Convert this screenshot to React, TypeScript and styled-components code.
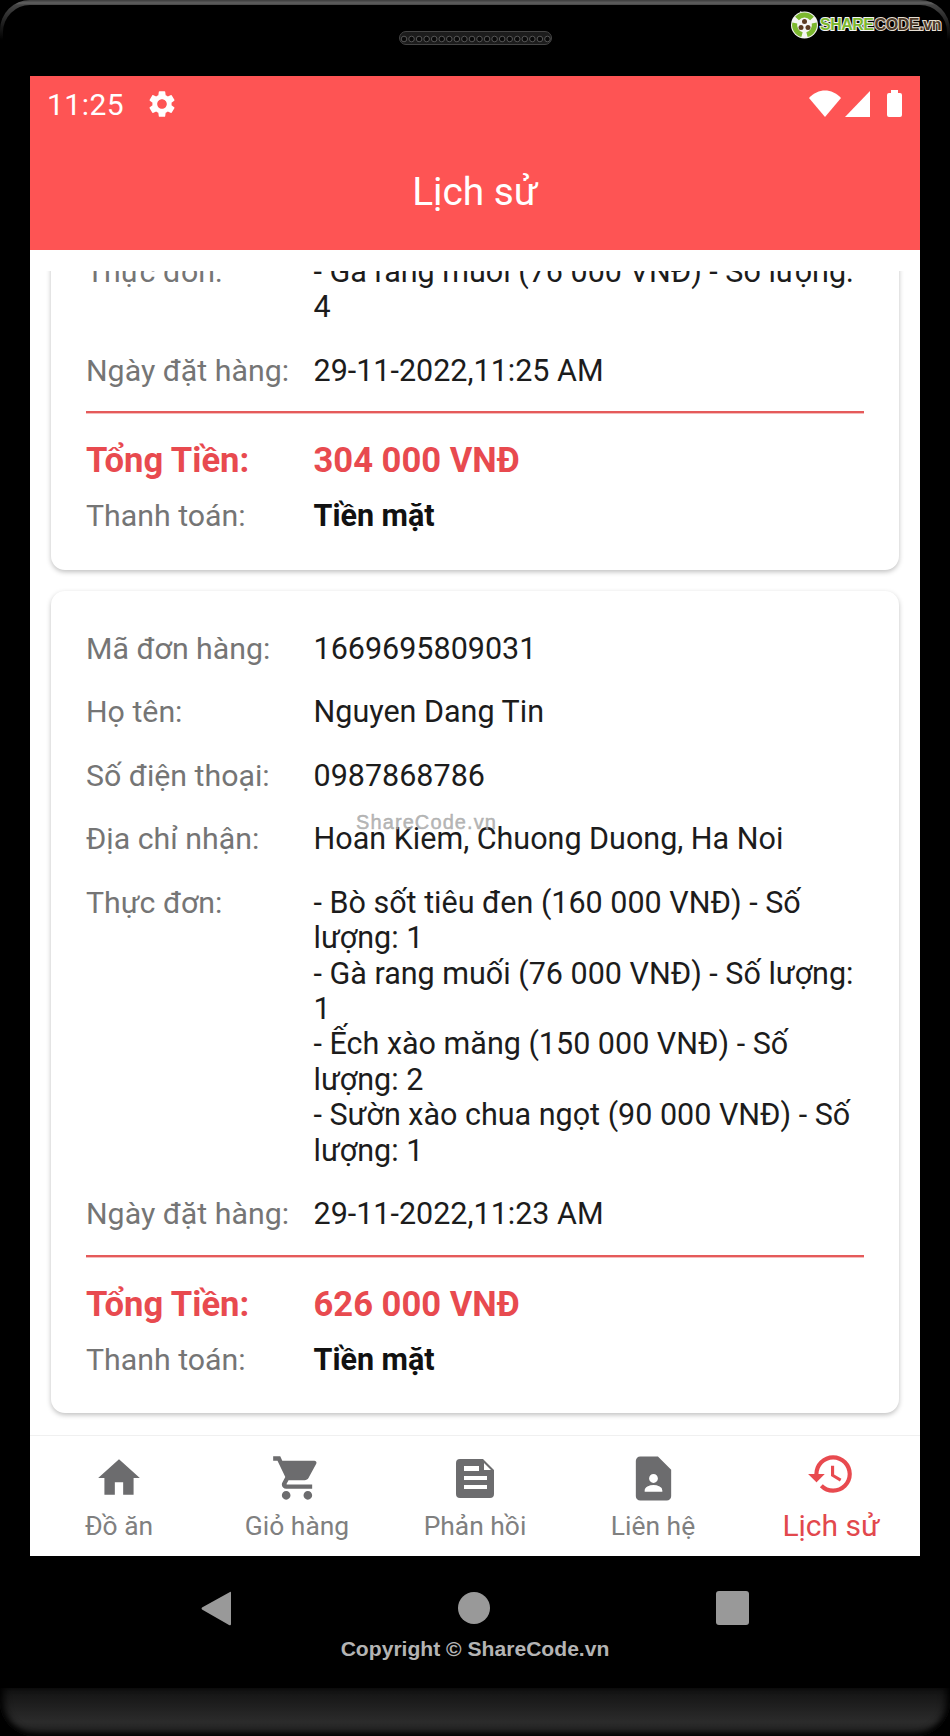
import styled, { createGlobalStyle } from "styled-components";
import { MdContactPage, MdHistory, MdHome, MdSettings, MdShoppingCart } from "react-icons/md";

const GlobalStyle = createGlobalStyle`
  html, body {
    margin: 0;
    padding: 0;
    background: #000;
    font-family: Roboto, "Noto Sans", sans-serif;
  }
`;

const Phone = styled.div`
  position: relative;
  width: 950px;
  height: 1736px;
  background: #000;
  overflow: hidden;
  display: flex;
  flex-direction: column;
`;

const TopBezel = styled.div`
  position: relative;
  height: 76px;
  box-sizing: border-box;
  flex-shrink: 0;
  padding: 5px 3px 0;
  display: flex;
  background: linear-gradient(#3c3c3c 0, #606060 3px, #444 5px, #222 22px, #000 40px);
  border-radius: 30px 30px 0 0;
`;

const BezelInner = styled.div`
  flex: 1;
  display: flex;
  justify-content: center;
  background: #000;
  border-radius: 27px 27px 0 0;
`;

const Speaker = styled.div`
  height: 14px;
  margin-top: 26px;
  display: flex;
`;

const Logo = styled.div`
  position: absolute;
  top: 10px;
  left: 790px;
  display: flex;
  align-items: center;
  gap: 1px;
`;

const LogoGreen = styled.span`
  font: 700 16px "Liberation Sans", sans-serif;
  letter-spacing: -0.5px;
  color: #7cb82f;
  -webkit-text-stroke: 2px #f4f4f4;
  paint-order: stroke fill;
`;

const LogoBrown = styled.span`
  font: 700 16px "Liberation Sans", sans-serif;
  letter-spacing: -0.4px;
  color: #4e3b29;
  -webkit-text-stroke: 2px #e6ded2;
  paint-order: stroke fill;
`;

const Screen = styled.div`
  height: 1480px;
  margin: 0 30px;
  flex-shrink: 0;
  background: #fff;
  display: flex;
  flex-direction: column;
  overflow: hidden;
`;

const Header = styled.div`
  height: 174px;
  flex-shrink: 0;
  background: #fe5454;
  color: #fff;
  display: flex;
  flex-direction: column;
`;

const StatusBar = styled.div`
  height: 54px;
  padding: 2px 15px 0 17px;
  box-sizing: border-box;
  display: flex;
  align-items: center;
  justify-content: space-between;
`;

const StatusLeft = styled.div`
  display: flex;
  align-items: center;
  gap: 22px;
`;

const StatusTime = styled.span`
  font-size: 30px;
  letter-spacing: 0.5px;
`;

const Title = styled.div`
  flex: 1;
  padding-top: 3px;
  display: flex;
  align-items: center;
  justify-content: center;
  font-size: 38.8px;
`;

const Body = styled.div`
  flex: 1;
  min-height: 0;
  padding-top: 21px;
  display: flex;
  flex-direction: column;
`;

const OrderList = styled.div`
  flex: 1;
  min-height: 0;
  overflow: hidden;
  padding: 0 21px;
  display: flex;
  flex-direction: column;
  gap: 21px;
`;

const Card = styled.div<{ $scrolled?: boolean }>`
  flex-shrink: 0;
  background: #fff;
  border-radius: 14px;
  box-shadow: 0 2px 5px rgba(0, 0, 0, 0.25);
  padding: ${({ $scrolled }) => ($scrolled ? "0" : "40px")} 35px 36px;
  margin-top: ${({ $scrolled }) => ($scrolled ? "-17px" : "0")};
`;

const Row = styled.div`
  display: flex;
  line-height: 35.4px;
  margin-bottom: 28.1px;
`;

const Label = styled.div`
  width: 227.5px;
  flex-shrink: 0;
  font-size: 30.3px;
  color: #757575;
`;

const Value = styled.div`
  flex: 1;
  font-size: 30.5px;
  color: #1c1c1c;
`;

const Divider = styled.div`
  height: 2px;
  background: #e55a5a;
  box-shadow: 0 1px 0 rgba(229, 90, 90, 0.4);
  margin: -5px 0 26px;
`;

const TotalRow = styled.div`
  display: flex;
  font-size: 34.6px;
  line-height: 42px;
  font-weight: 700;
  color: #e84a4f;
  margin-bottom: 17px;
`;

const TotalLabel = styled.div`
  width: 227.5px;
  flex-shrink: 0;
`;

const PayRow = styled.div`
  display: flex;
  line-height: 35.4px;
`;

const PayValue = styled.div`
  font-size: 30.5px;
  font-weight: 700;
  color: #111;
`;

const Watermark = styled.div`
  position: absolute;
  top: 811px;
  left: 356px;
  font: 400 20px "Liberation Sans", sans-serif;
  letter-spacing: 1.1px;
  color: rgba(170, 170, 170, 0.85);
  -webkit-text-stroke: 0.5px rgba(170, 170, 170, 0.85);
`;

const TabBar = styled.div`
  height: 121px;
  flex-shrink: 0;
  border-top: 1px solid #f0f0f0;
  box-sizing: border-box;
  display: grid;
  grid-template-columns: repeat(5, 1fr);
`;

const Tab = styled.div<{ $active?: boolean }>`
  display: flex;
  flex-direction: column;
  align-items: center;
  padding-top: ${({ $active }) => ($active ? "12px" : "16px")};
  color: ${({ $active }) => ($active ? "#e84a4f" : "#6c6c6e")};
`;

const IconSlot = styled.div`
  height: 52px;
  display: flex;
  align-items: center;
  justify-content: center;
`;

const TabLabel = styled.div<{ $active?: boolean }>`
  font-size: ${({ $active }) => ($active ? "30px" : "26.4px")};
  line-height: 32px;
  margin-top: ${({ $active }) => ($active ? "10px" : "6px")};
  color: ${({ $active }) => ($active ? "#e2484d" : "#808080")};
`;

const KeysArea = styled.div`
  height: 132px;
  flex-shrink: 0;
  display: flex;
  flex-direction: column;
  align-items: center;
`;

const NavKeys = styled.div`
  height: 46px;
  margin-top: 35px;
  width: 548px;
  display: flex;
  align-items: flex-start;
  justify-content: space-between;
`;

const RoundKey = styled.div`
  width: 32px;
  height: 32px;
  margin-top: 1px;
  border-radius: 50%;
  background: #999;
`;

const SquareKey = styled.div`
  width: 33px;
  height: 34px;
  border-radius: 3px;
  background: #999;
`;

const Copyright = styled.div`
  font: 700 21.1px "Liberation Sans", sans-serif;
  color: #b4b4b4;
`;

const BottomBezel = styled.div`
  flex: 1;
  background: linear-gradient(#121212, #2b2b2b 70%, #222);
  box-shadow: inset 0 -5px 7px -2px #000, inset 7px 0 8px -4px #000, inset -7px 0 8px -4px #000;
  border-radius: 0 0 34px 34px;
`;

const orders = [
  {
    scrolled: true,
    rows: [] as { label: string; value: string }[],
    menu: ["- Gà rang muối (76 000 VNĐ) - Số lượng: 4"],
    date: "29-11-2022,11:25 AM",
    total: "304 000 VNĐ",
  },
  {
    scrolled: false,
    rows: [
      { label: "Mã đơn hàng:", value: "1669695809031" },
      { label: "Họ tên:", value: "Nguyen Dang Tin" },
      { label: "Số điện thoại:", value: "0987868786" },
      { label: "Địa chỉ nhận:", value: "Hoan Kiem, Chuong Duong, Ha Noi" },
    ],
    menu: [
      "- Bò sốt tiêu đen (160 000 VNĐ) - Số lượng: 1",
      "- Gà rang muối (76 000 VNĐ) - Số lượng: 1",
      "- Ếch xào măng (150 000 VNĐ) - Số lượng: 2",
      "- Sườn xào chua ngọt (90 000 VNĐ) - Số lượng: 1",
    ],
    date: "29-11-2022,11:23 AM",
    total: "626 000 VNĐ",
  },
];

// rounded sheet with a folded corner, the bundled packs only have the narrow one
const NoteIcon = () => (
  <svg width="38" height="39" viewBox="0 0 38 39">
    <path
      fillRule="evenodd"
      fill="currentColor"
      d="M4 0H27L38 11V35Q38 39 34 39H4Q0 39 0 35V4Q0 0 4 0ZM8 7V12H23V7ZM8 17V21H31V17ZM8 26V30H31V26Z"
    />
    <path d="M28 4L35 11H28Z" fill="#fff" />
  </svg>
);

const tabs = [
  { label: "Đồ ăn", icon: <MdHome size={50} /> },
  { label: "Giỏ hàng", icon: <MdShoppingCart size={52} /> },
  { label: "Phản hồi", icon: <NoteIcon /> },
  { label: "Liên hệ", icon: <MdContactPage size={53} /> },
  { label: "Lịch sử", icon: <MdHistory size={50} />, active: true },
];

const grilleDots = Array.from({ length: 20 }, (_, i) => 5 + i * 7.55);

export default function App() {
  return (
    <Phone>
      <GlobalStyle />
      <TopBezel>
        <BezelInner>
          <Speaker>
            <svg width="153" height="14" viewBox="0 0 153 14">
              <rect x="0.5" y="0.5" width="152" height="13" rx="6.5" fill="#1c1c1c" stroke="#444" />
              {grilleDots.map((cx) => (
                <circle key={cx} cx={cx} cy="8" r="2.8" fill="#0a0a0a" stroke="#555" />
              ))}
            </svg>
          </Speaker>
        </BezelInner>
        <Logo>
          <svg width="29" height="29" viewBox="0 0 29 29">
            <circle cx="14.5" cy="15" r="13.5" fill="#f4f4f4" />
            <path d="M10 1 L14 3 L12 7 Z" fill="#f4f4f4" />
            <g fill="none" stroke="#7cb82f" strokeWidth="5">
              <path d="M7 8.5 A10 10 0 0 1 22 8.5" />
              <path d="M24.2 13 A10 10 0 0 1 17 24.7" />
              <path d="M12 24.7 A10 10 0 0 1 4.8 13" />
            </g>
            <g fill="#5a3a22">
              <circle cx="14.5" cy="11.5" r="2.5" />
              <circle cx="11" cy="17.5" r="2.5" />
              <circle cx="18" cy="17.5" r="2.5" />
            </g>
          </svg>
          <LogoGreen>SHARE</LogoGreen>
          <LogoBrown>CODE.vn</LogoBrown>
        </Logo>
      </TopBezel>
      <Screen>
        <Header>
          <StatusBar>
            <StatusLeft>
              <StatusTime>11:25</StatusTime>
              <MdSettings size={32} color="#fff" />
            </StatusLeft>
            <svg width="96" height="28" viewBox="0 0 96 28" fill="#fff">
              <path d="M0 8 C9 -2 23 -2 32 8 L16 27 Z" />
              <path d="M36 27 L61 1 V27 Z" />
              <path d="M78 5 Q78 3 80 3 H82 V0 H89 V3 H91 Q93 3 93 5 V25 Q93 27 91 27 H80 Q78 27 78 25 Z" />
            </svg>
          </StatusBar>
          <Title>Lịch sử</Title>
        </Header>
        <Body>
          <OrderList>
            {orders.map((order) => (
              <Card key={order.total} $scrolled={order.scrolled}>
                {order.rows.map((row) => (
                  <Row key={row.label}>
                    <Label>{row.label}</Label>
                    <Value>{row.value}</Value>
                  </Row>
                ))}
                <Row>
                  <Label>Thực đơn:</Label>
                  <Value>
                    {order.menu.map((line) => (
                      <div key={line}>{line}</div>
                    ))}
                  </Value>
                </Row>
                <Row>
                  <Label>Ngày đặt hàng:</Label>
                  <Value>{order.date}</Value>
                </Row>
                <Divider />
                <TotalRow>
                  <TotalLabel>Tổng Tiền:</TotalLabel>
                  <div>{order.total}</div>
                </TotalRow>
                <PayRow>
                  <Label>Thanh toán:</Label>
                  <PayValue>Tiền mặt</PayValue>
                </PayRow>
              </Card>
            ))}
          </OrderList>
        </Body>
        <TabBar>
          {tabs.map(({ label, icon, active }) => (
            <Tab key={label} $active={active}>
              <IconSlot>{icon}</IconSlot>
              <TabLabel $active={active}>{label}</TabLabel>
            </Tab>
          ))}
        </TabBar>
      </Screen>
      <Watermark>ShareCode.vn</Watermark>
      <KeysArea>
        <NavKeys>
          <svg width="30" height="35" viewBox="0 0 30 35">
            <path d="M29 1 Q30 0 30 2 V33 Q30 35 28 34 L1 18.5 Q0 17.5 1 16.5 Z" fill="#999" />
          </svg>
          <RoundKey />
          <SquareKey />
        </NavKeys>
        <Copyright>Copyright © ShareCode.vn</Copyright>
      </KeysArea>
      <BottomBezel />
    </Phone>
  );
}
